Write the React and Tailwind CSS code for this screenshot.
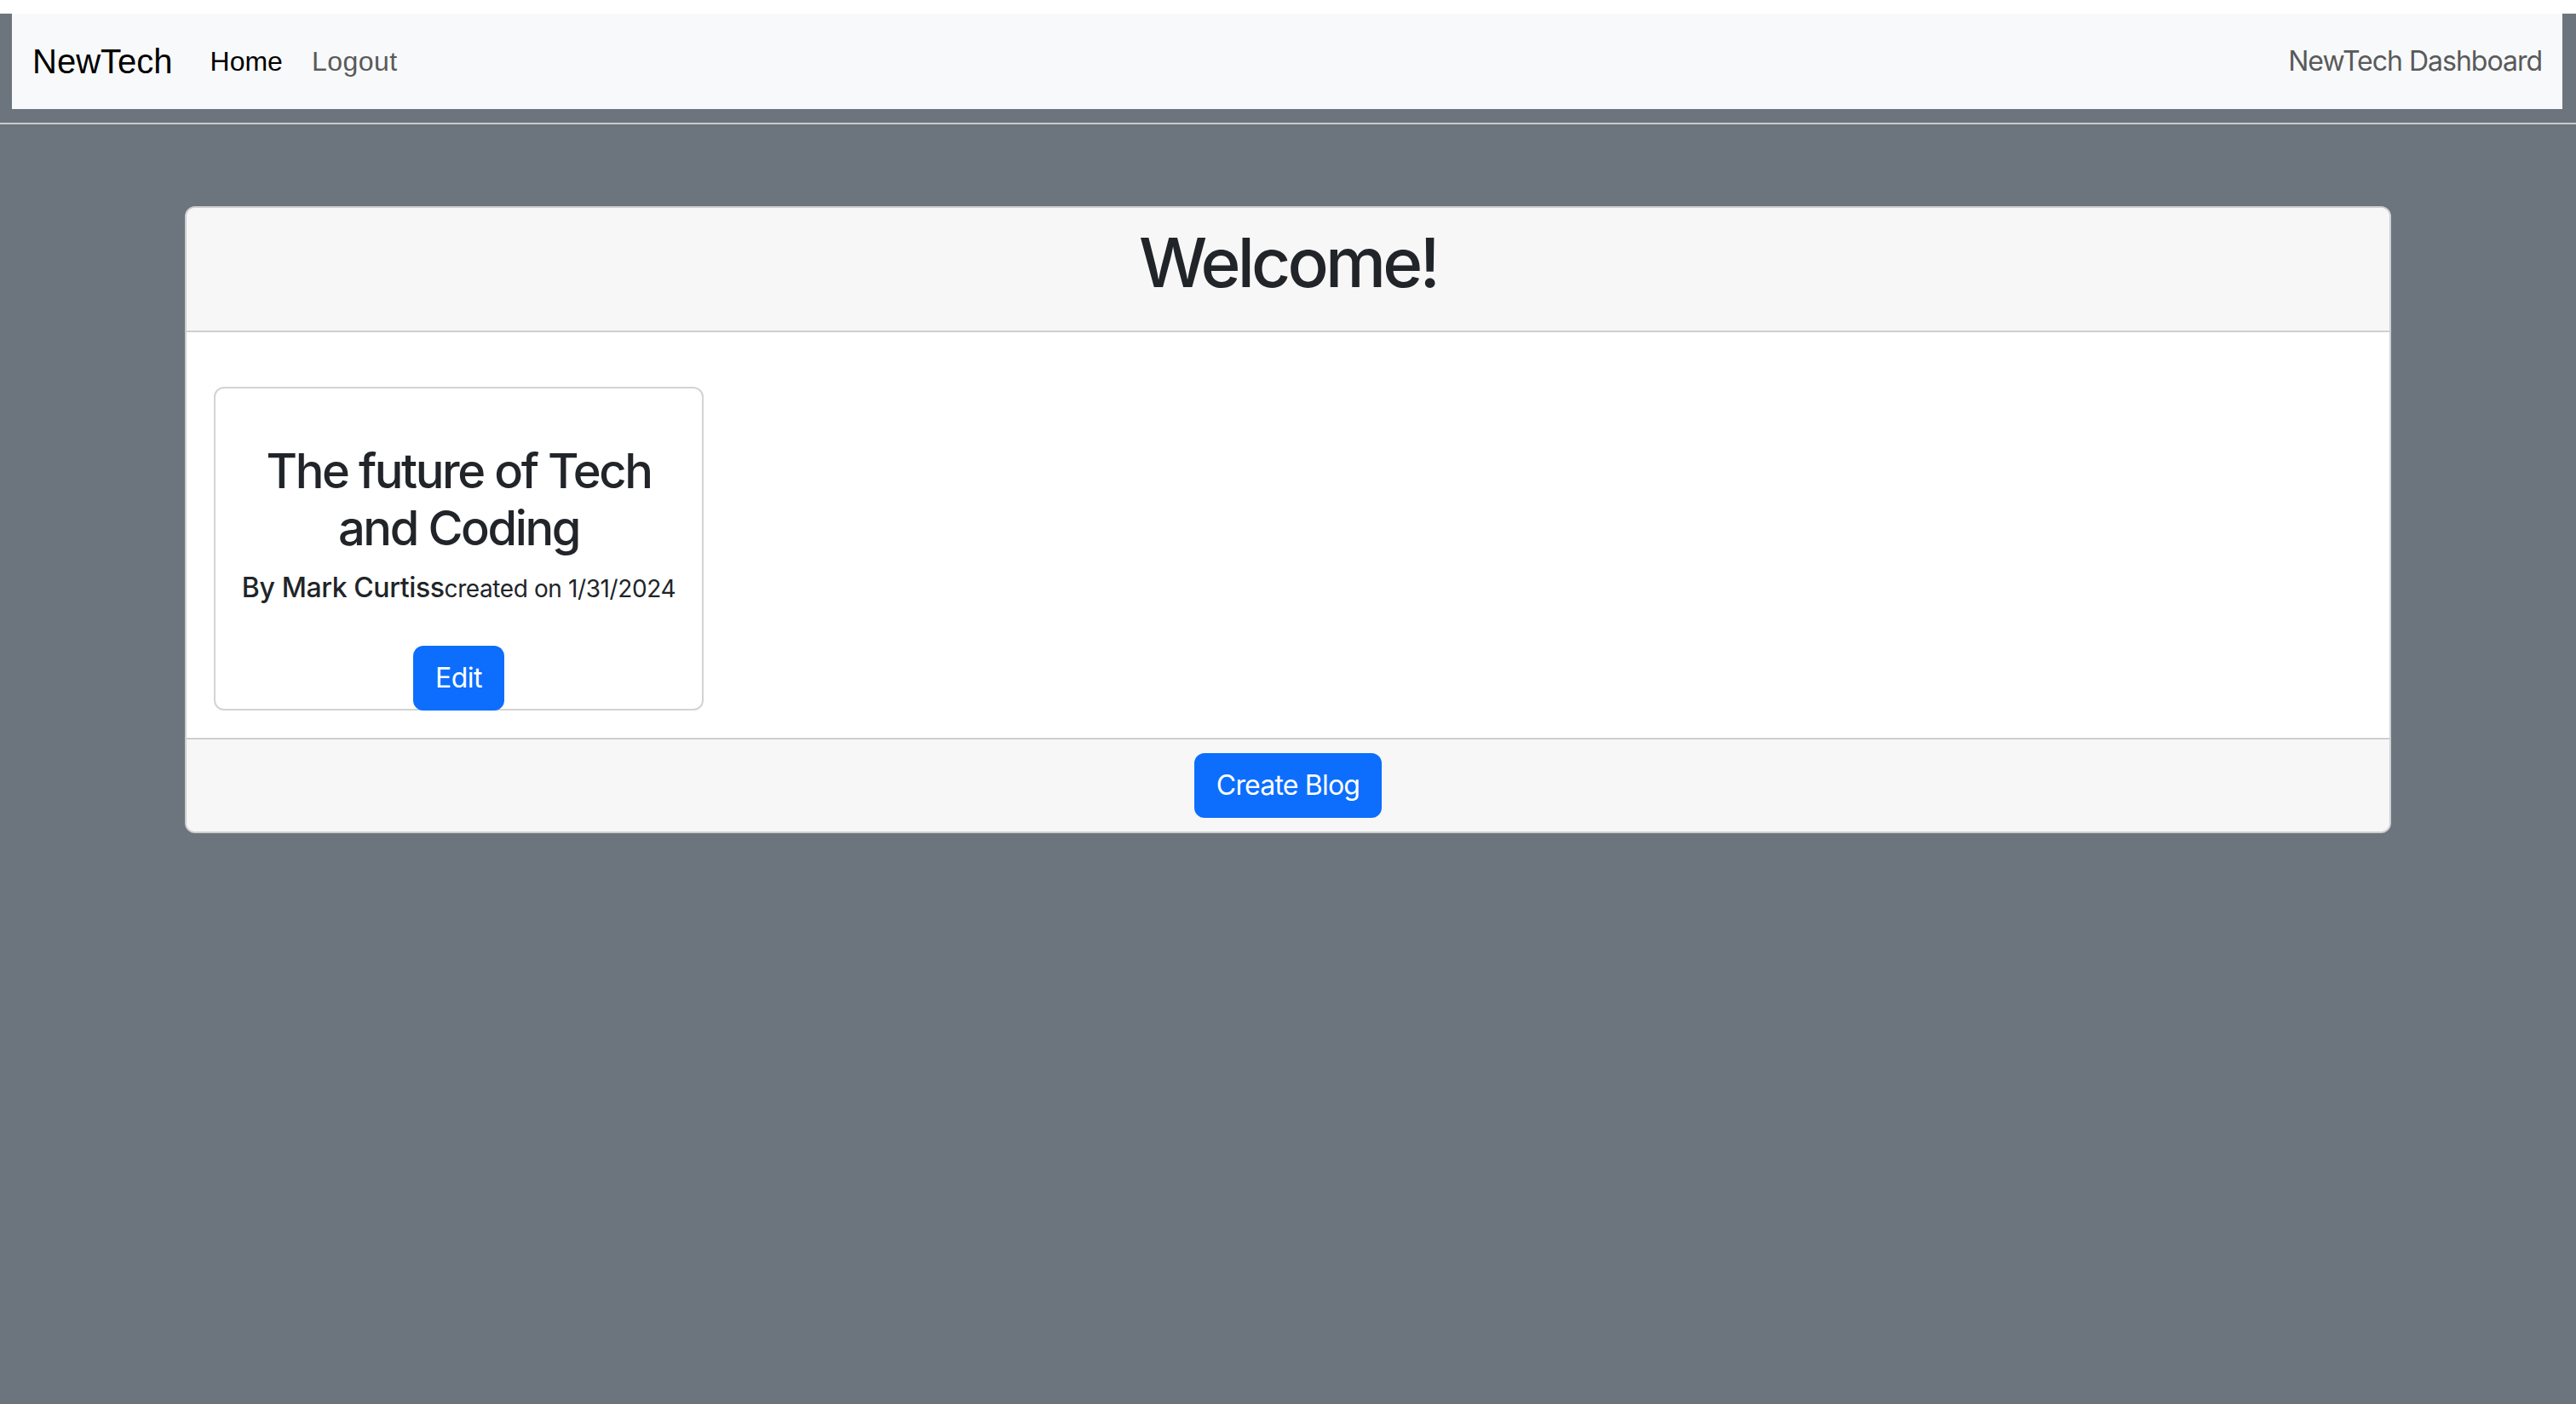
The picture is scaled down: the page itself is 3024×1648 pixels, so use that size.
import React from 'react';

const Navbar = () => {
  return (
    <nav className="ml-[14px] mr-[16px] mt-[16px] h-[112px] bg-[#f8f9fa] flex items-center justify-between px-[24px]">
      <div className="flex items-center" style={{ fontFamily: '"Liberation Sans", Arial, sans-serif' }}>
        <a className="text-[40px] leading-[60px] text-black mr-[44px]">NewTech</a>
        <a className="text-[32px] leading-[48px] text-black mr-[34px]">Home</a>
        <a className="text-[32px] leading-[48px] text-[#595a5b] tracking-[0.5px]">Logout</a>
      </div>
      <span className="text-[32px] leading-[48px] text-[#595a5b] tracking-[-1px]">NewTech Dashboard</span>
    </nav>
  );
};

const BlogCard = ({ title, author, date }) => {
  return (
    <div className="w-[575px] border-2 border-[#d3d3d4] rounded-[12px] bg-white flex flex-col items-center pt-[64px] text-[#212529]">
      <h3 className="text-[56px] leading-[67px] font-medium text-center px-[32px] mb-[12px] tracking-[-2.4px]">{title}</h3>
      <p className="whitespace-nowrap leading-[48px] mb-[39px] tracking-[-0.4px]">
        <span className="text-[32px] font-medium">By {author}</span>
        <span className="text-[28px]">created on {date}</span>
      </p>
      <button className="bg-[#0d6efd] text-white text-[32px] leading-[48px] px-[24px] py-[12px] rounded-[12px] border-2 border-[#0d6efd] -mb-[2px] tracking-[-0.5px]">
        Edit
      </button>
    </div>
  );
};

const App = () => {
  return (
    <div
      className="min-h-screen w-full bg-[#6c757d] pb-[40px]"
      style={{ fontFamily: 'Inter, "Noto Sans", sans-serif' }}
    >
      <Navbar />
      <div className="mt-[16px] h-[2px] w-full bg-[#c9cbcd]" />

      <main className="px-[217px] mt-[96px]">
        {/* Welcome card */}
        <section className="border-2 border-[#cfcfd0] rounded-[12px] overflow-hidden bg-white">
          <header className="bg-[#f7f7f7] border-b-2 border-[#cfcfd0] pt-[16px] pb-[16px] text-center">
            <h1 className="text-[80px] leading-[96px] font-medium text-[#212529] mb-[16px] tracking-[-3.8px]">Welcome!</h1>
          </header>

          <div className="px-[32px] pt-[64px] pb-[32px]">
            <BlogCard title="The future of Tech and Coding" author="Mark Curtiss" date="1/31/2024" />
          </div>

          <footer className="bg-[#f7f7f7] border-t-2 border-[#cfcfd0] py-[16px] flex justify-center">
            <button className="bg-[#0d6efd] text-white text-[32px] leading-[48px] px-[24px] py-[12px] rounded-[12px] border-2 border-[#0d6efd] tracking-[-0.8px]">
              Create Blog
            </button>
          </footer>
        </section>
      </main>
    </div>
  );
};

export default App;
